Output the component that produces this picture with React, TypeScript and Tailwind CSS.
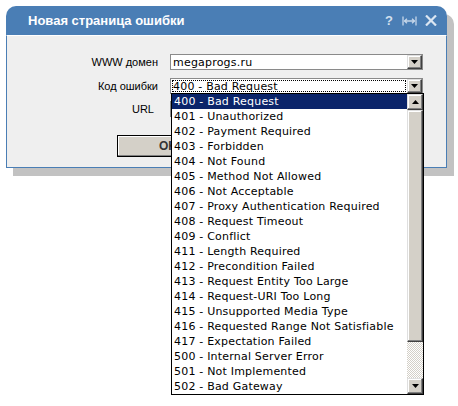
import React from "react";

const codes = [
  "400 - Bad Request",
  "401 - Unauthorized",
  "402 - Payment Required",
  "403 - Forbidden",
  "404 - Not Found",
  "405 - Method Not Allowed",
  "406 - Not Acceptable",
  "407 - Proxy Authentication Required",
  "408 - Request Timeout",
  "409 - Conflict",
  "411 - Length Required",
  "412 - Precondition Failed",
  "413 - Request Entity Too Large",
  "414 - Request-URI Too Long",
  "415 - Unsupported Media Type",
  "416 - Requested Range Not Satisfiable",
  "417 - Expectation Failed",
  "500 - Internal Server Error",
  "501 - Not Implemented",
  "502 - Bad Gateway",
];

function Tri({ up = false }: { up?: boolean }) {
  return (
    <svg width="7" height="4" viewBox="0 0 7 4" className="block">
      {up ? <polygon points="0,4 7,4 3.5,0" fill="#000" /> : <polygon points="0,0 7,0 3.5,4" fill="#000" />}
    </svg>
  );
}

function ArrowBtn({ up = false, cls = "" }: { up?: boolean; cls?: string }) {
  return (
    <div
      className={
        "flex items-center justify-center bg-[#d4d0c8] border border-t-[#dfdfdf] border-l-[#dfdfdf] border-b-[#404040] border-r-[#404040] shadow-[inset_-1px_-1px_#808080,inset_1px_1px_#ffffff] " +
        cls
      }
    >
      <Tri up={up} />
    </div>
  );
}

function SelectBox({ value, focused = false }: { value: string; focused?: boolean }) {
  return (
    <div className="h-[16px] w-[253px] bg-white border border-[#8a8a8a] flex items-stretch">
      <div className="flex-1 flex items-center p-px">
        <div
          className={
            "h-full w-full flex items-center pl-[1px] text-[11px] leading-none tracking-[0.2px] text-black font-['DejaVu_Sans',sans-serif] " +
            (focused ? "outline outline-1 outline-dotted outline-black -outline-offset-1" : "")
          }
        >
          {value}
        </div>
      </div>
      <ArrowBtn cls="w-[15px] h-[14px]" />
    </div>
  );
}

export default function App() {
  return (
    <div className="w-[458px] h-[406px] bg-white relative overflow-hidden font-['Liberation_Sans',sans-serif]">
      <div className="pt-[6px] pl-[6px]">
        <div className="w-[441px] rounded-t-[10px] shadow-[7px_8px_0_#c2c2c2]">
          <div className="h-[29px] bg-[#4a7eb5] rounded-t-[10px] flex items-center pl-[22px] pr-[10px]">
            <span className="text-white font-bold text-[13px] leading-none flex-1">Новая страница ошибки</span>
            <div className="flex items-center gap-[8px] text-[#d3e0ee]">
              <span className="font-bold text-[13px] leading-none mr-[1px]">?</span>
              <svg width="15" height="10" viewBox="0 0 15 10" className="block">
                <path d="M1 0.5V9.5M14 0.5V9.5M2 5H13M2.5 5L5 2.8M2.5 5L5 7.2M12.5 5L10 2.8M12.5 5L10 7.2" stroke="#c5d6e9" strokeWidth="1.3" fill="none" />
              </svg>
              <svg width="12" height="11" viewBox="0 0 12 11" className="block">
                <path d="M1 0.5L11 10.5M11 0.5L1 10.5" stroke="#dbe6f2" strokeWidth="2.2" fill="none" />
              </svg>
            </div>
          </div>
          <div className="bg-[#efefef] border border-[#4a7eb5] border-t-white h-[133px] pt-[18px]">
            <div className="grid grid-cols-[151px_253px] gap-x-[12px] gap-y-[7px] text-[11px] text-black">
              <div className="h-[16px] flex items-center justify-end">WWW домен</div>
              <SelectBox value="megaprogs.ru" />
              <div className="h-[16px] flex items-center justify-end mt-[1px]">Код ошибки</div>
              <div className="relative mt-[1px]">
                <SelectBox value="400 - Bad Request" focused />
                <div className="absolute left-[1px] top-[15px] w-[253px] h-[302px] bg-white border border-black z-10 flex">
                  <div className="flex-1 flex flex-col font-['DejaVu_Sans',sans-serif] text-[11px] tracking-[0.2px]">
                    {codes.map((c, i) => (
                      <div
                        key={c}
                        className={
                          "h-[15px] leading-[15px] pl-[2px] whitespace-nowrap " +
                          (i === 0 ? "bg-[#0a246a] text-white" : "text-black")
                        }
                      >
                        {c}
                      </div>
                    ))}
                  </div>
                  <div className="w-[16px] flex flex-col">
                    <ArrowBtn up cls="w-[16px] h-[16px]" />
                    <div className="h-[232px] bg-[#d4d0c8] border border-t-[#dfdfdf] border-l-[#dfdfdf] border-b-[#404040] border-r-[#404040] shadow-[inset_-1px_-1px_#808080,inset_1px_1px_#ffffff]" />
                    <div className="flex-1 bg-[repeating-conic-gradient(#d4d0c8_0_25%,#ffffff_0_50%)] bg-size-[2px_2px]" />
                    <ArrowBtn cls="w-[16px] h-[16px]" />
                  </div>
                </div>
              </div>
              <div className="h-[16px] flex items-center justify-end pr-[4px]">URL</div>
              <div className="h-[16px] w-[253px] bg-white border border-[#8a8a8a]" />
            </div>
            <div className="flex justify-start pl-[110px] mt-[18px]">
              <div className="w-[102px] h-[22px] bg-[#d4d0c8] border border-black shadow-[inset_-1px_-1px_#808080,inset_1px_1px_#ffffff] flex items-center justify-center font-bold text-[12px] text-[#333]">
                OK
              </div>
            </div>
          </div>
        </div>
      </div>
    </div>
  );
}
